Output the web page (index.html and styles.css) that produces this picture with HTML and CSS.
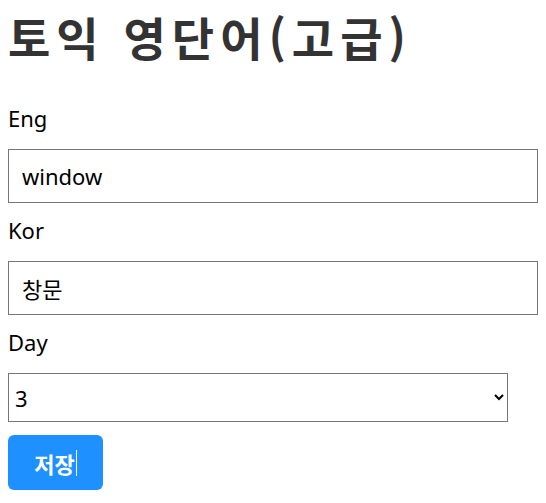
FILE: index.html
```html
<!DOCTYPE html>
<html lang="ko">
<head>
<meta charset="utf-8">
<link rel="stylesheet" href="styles.css">
</head>
<body>
<h1 class="title">토익 영단어(고급)</h1>
<form class="form">
  <div class="field">
    <label class="label">Eng</label>
    <input class="input" type="text" value="window">
  </div>
  <div class="field">
    <label class="label">Kor</label>
    <input class="input" type="text" value="창문">
  </div>
  <div class="field">
    <label class="label">Day</label>
    <select class="select"><option>1</option><option>2</option><option selected>3</option></select>
  </div>
  <button class="btn" type="button">저장<span class="caret"></span></button>
</form>
</body>
</html>
```
FILE: styles.css
```css
body {
  margin: 8px;
  font-family: "Noto Sans", "Noto Sans CJK KR", sans-serif;
  color: #000;
  background: #fff;
}
.title {
  margin: -2px 0 37px;
  font-size: 46px;
  line-height: 60px;
  letter-spacing: 6px;
  font-weight: 700;
  color: #333;
  font-family: "Noto Sans CJK KR", sans-serif;
}
.form {
  display: flex;
  flex-direction: column;
}
.field {
  display: flex;
  flex-direction: column;
  margin-bottom: 12px;
}
.label {
  font-size: 22px;
  line-height: 30px;
  margin-bottom: 16px;
}
.input {
  box-sizing: border-box;
  width: 100%;
  height: 54px;
  margin: 0;
  padding: 0 13px;
  border: 1px solid #767676;
  font-family: "Noto Sans", "Noto Sans CJK KR", sans-serif;
  font-size: 22px;
  color: #000;
}
.select {
  box-sizing: border-box;
  width: 500px;
  height: 49px;
  margin: 0;
  padding: 0 2px;
  border: 1px solid #767676;
  background: #fff;
  font-family: "Noto Sans", sans-serif;
  font-size: 22px;
  color: #000;
}
.field:last-of-type { margin-bottom: 13px; }
.btn {
  align-self: flex-start;
  box-sizing: border-box;
  width: 95px;
  height: 55px;
  border: none;
  border-radius: 6px;
  background: #1e90ff;
  color: #fff;
  font-family: "Noto Sans CJK KR", sans-serif;
  font-size: 22px;
  font-weight: 700;
  display: flex;
  align-items: center;
  justify-content: center;
  padding: 0;
}
.caret {
  display: inline-block;
  width: 1px;
  height: 26px;
  background: #fff;
  margin-left: 1px;
}
```
